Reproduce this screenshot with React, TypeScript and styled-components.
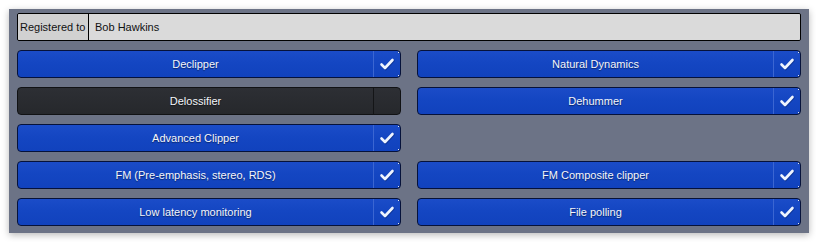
import React from "react";
import styled, { createGlobalStyle } from "styled-components";

const GlobalStyle = createGlobalStyle`
  body {
    margin: 0;
    background: #ffffff;
    font-family: Tahoma, "DejaVu Sans", "Liberation Sans", sans-serif;
  }
`;

const Panel = styled.div`
  margin: 9px;
  width: 800px;
  height: 224px;
  box-sizing: border-box;
  background: #6c7386;
  padding: 4px 8px 7px 8px;
  box-shadow: 0 2px 7px rgba(0, 0, 0, 0.28);
  display: flex;
  flex-direction: column;
  gap: 9px;
`;

const Registration = styled.div`
  display: flex;
  height: 28px;
  box-sizing: border-box;
  border: 1px solid #000;
  border-radius: 2px;
  overflow: hidden;
  font-family: "Liberation Sans", Arial, sans-serif;
  font-size: 11px;
  color: #111;
`;

const RegLabel = styled.div`
  width: 71px;
  box-sizing: border-box;
  background: #d1d1d1;
  border-right: 1px solid #000;
  display: flex;
  align-items: center;
  padding-left: 2px;
  white-space: nowrap;
`;

const RegValue = styled.div`
  flex: 1;
  background: #dadada;
  display: flex;
  align-items: center;
  padding-left: 6px;
`;

const Grid = styled.div`
  display: grid;
  grid-template-columns: 384px 384px;
  grid-auto-rows: 28px;
  column-gap: 16px;
  row-gap: 9px;
`;

const Toggle = styled.div<{ $on: boolean }>`
  position: relative;
  display: flex;
  box-sizing: border-box;
  border: 1px solid ${(p) => (p.$on ? "#06123a" : "#111214")};
  border-radius: 4px;
  background: ${(p) =>
    p.$on
      ? "linear-gradient(#1b4cc8 0%, #1446c2 45%, #1142bd 100%)"
      : "linear-gradient(#2d2f34, #26282c)"};
  color: #f4f6fb;
  font-family: "Liberation Sans", Arial, sans-serif;
  font-size: 11px;
  text-shadow: 0 1px 1px rgba(0, 0, 0, 0.45);
`;

const ToggleLabel = styled.div`
  flex: 1;
  display: flex;
  align-items: center;
  justify-content: center;
`;

const CheckBox = styled.div<{ $on: boolean }>`
  width: 26px;
  border-left: 1px solid ${(p) => (p.$on ? "#3b66d2" : "#141517")};
  display: flex;
  align-items: center;
  justify-content: center;
`;

const CornerDot = styled.span<{ $bottom?: boolean }>`
  position: absolute;
  right: 1px;
  ${(p) => (p.$bottom ? "bottom: 1px;" : "top: 1px;")}
  width: 1px;
  height: 1px;
  background: #dfe6f5;
`;

const Spacer = styled.div``;

const Check = () => (
  <svg width="16" height="14" viewBox="0 0 16 14">
    <polyline
      points="2.5,7.5 6,11 13.5,3"
      fill="none"
      stroke="#0a2a7a"
      strokeWidth="3"
      strokeLinecap="round"
      strokeLinejoin="round"
      transform="translate(0.6,0.8)"
      opacity="0.6"
    />
    <polyline
      points="2.5,7.5 6,11 13.5,3"
      fill="none"
      stroke="#eef4ff"
      strokeWidth="2.6"
      strokeLinecap="round"
      strokeLinejoin="round"
    />
  </svg>
);

const items: (null | { label: string; on: boolean })[] = [
  { label: "Declipper", on: true },
  { label: "Natural Dynamics", on: true },
  { label: "Delossifier", on: false },
  { label: "Dehummer", on: true },
  { label: "Advanced Clipper", on: true },
  null,
  { label: "FM (Pre-emphasis, stereo, RDS)", on: true },
  { label: "FM Composite clipper", on: true },
  { label: "Low latency monitoring", on: true },
  { label: "File polling", on: true },
];

export default function App() {
  return (
    <>
      <GlobalStyle />
      <Panel>
        <Registration>
          <RegLabel>Registered to</RegLabel>
          <RegValue>Bob Hawkins</RegValue>
        </Registration>
        <Grid>
          {items.map((it, i) =>
            it ? (
              <Toggle key={i} $on={it.on}>
                <ToggleLabel>{it.label}</ToggleLabel>
                <CheckBox $on={it.on}>{it.on && <Check />}</CheckBox>
                {it.on && (
                  <>
                    <CornerDot />
                    <CornerDot $bottom />
                  </>
                )}
              </Toggle>
            ) : (
              <Spacer key={i} />
            )
          )}
        </Grid>
      </Panel>
    </>
  );
}
